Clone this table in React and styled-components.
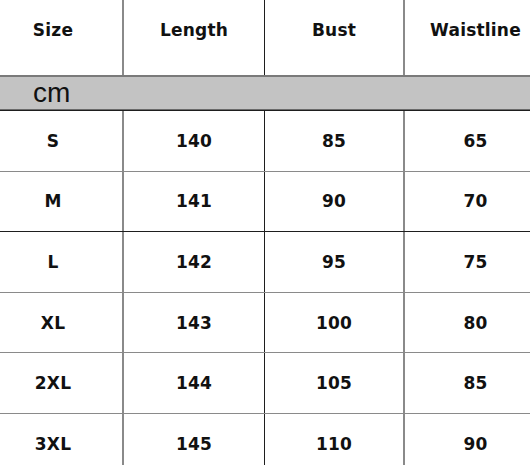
import React from 'react'
import styled, { createGlobalStyle } from 'styled-components'

const GlobalStyle = createGlobalStyle`
    html, body {
        margin: 0;
        padding: 0;
        background: #ffffff;
    }
    body {
        width: 530px;
        height: 465px;
        overflow: hidden;
    }
`

const rows = [
    ['S', '140', '85', '65'],
    ['M', '141', '90', '70'],
    ['L', '142', '95', '75'],
    ['XL', '143', '100', '80'],
    ['2XL', '144', '105', '85'],
    ['3XL', '145', '110', '90'],
]

const lineTones = ['#1e1e1e', '#8a8a8a', '#1e1e1e', '#8a8a8a', '#8a8a8a', '#8a8a8a']

export default function App() {
    return (
        <Page>
            <GlobalStyle />
            <Chart>
                <HeaderRow>
                    <Cell>Size</Cell>
                    <Cell>Length</Cell>
                    <Cell>Bust</Cell>
                    <Cell>Waistline</Cell>
                </HeaderRow>
                <UnitBand>cm</UnitBand>
                {rows.map((r, i) => (
                    <DataRow key={r[0]} $line={lineTones[i]}>
                        {r.map((v, j) => (
                            <Cell key={j}>{v}</Cell>
                        ))}
                    </DataRow>
                ))}
            </Chart>
        </Page>
    )
}

const Page = styled.div`
    width: 530px;
    height: 465px;
    overflow: hidden;
    background: #fff;
`

const Chart = styled.div`
    width: 562px;
    margin-left: -16px;
    display: flex;
    flex-direction: column;
    font-family: "Comic Sans MS", "DejaVu Sans", sans-serif;
    font-weight: bold;
    color: #111;
`

const Row = styled.div`
    display: grid;
    grid-template-columns: 140px 141px 140px 141px;
    box-sizing: border-box;
`

const HeaderRow = styled(Row)`
    height: 77px;
    border-bottom: 2px solid #7a7a7a;
    & > div {
        padding-bottom: 15px;
    }
`

const DataRow = styled(Row)`
    height: 60.6px;
    border-top: 1px solid ${p => p.$line};
`

const Cell = styled.div`
    display: flex;
    align-items: center;
    justify-content: center;
    font-size: 17px;
    letter-spacing: 0.2px;
    border-right: 2px solid #8a8a8a;
    &:nth-child(2) {
        border-right: 1.5px solid #1e1e1e;
    }
    &:last-child {
        border-right: none;
    }
`

const UnitBand = styled.div`
    height: 33px;
    box-sizing: border-box;
    background: #c3c3c3;
    border-bottom: 1px solid #6a6a6a;
    padding-left: 49px;
    display: flex;
    align-items: center;
    font-family: "Liberation Sans", Arial, sans-serif;
    font-weight: normal;
    font-size: 28px;
    color: #111;
    line-height: 1;
`
